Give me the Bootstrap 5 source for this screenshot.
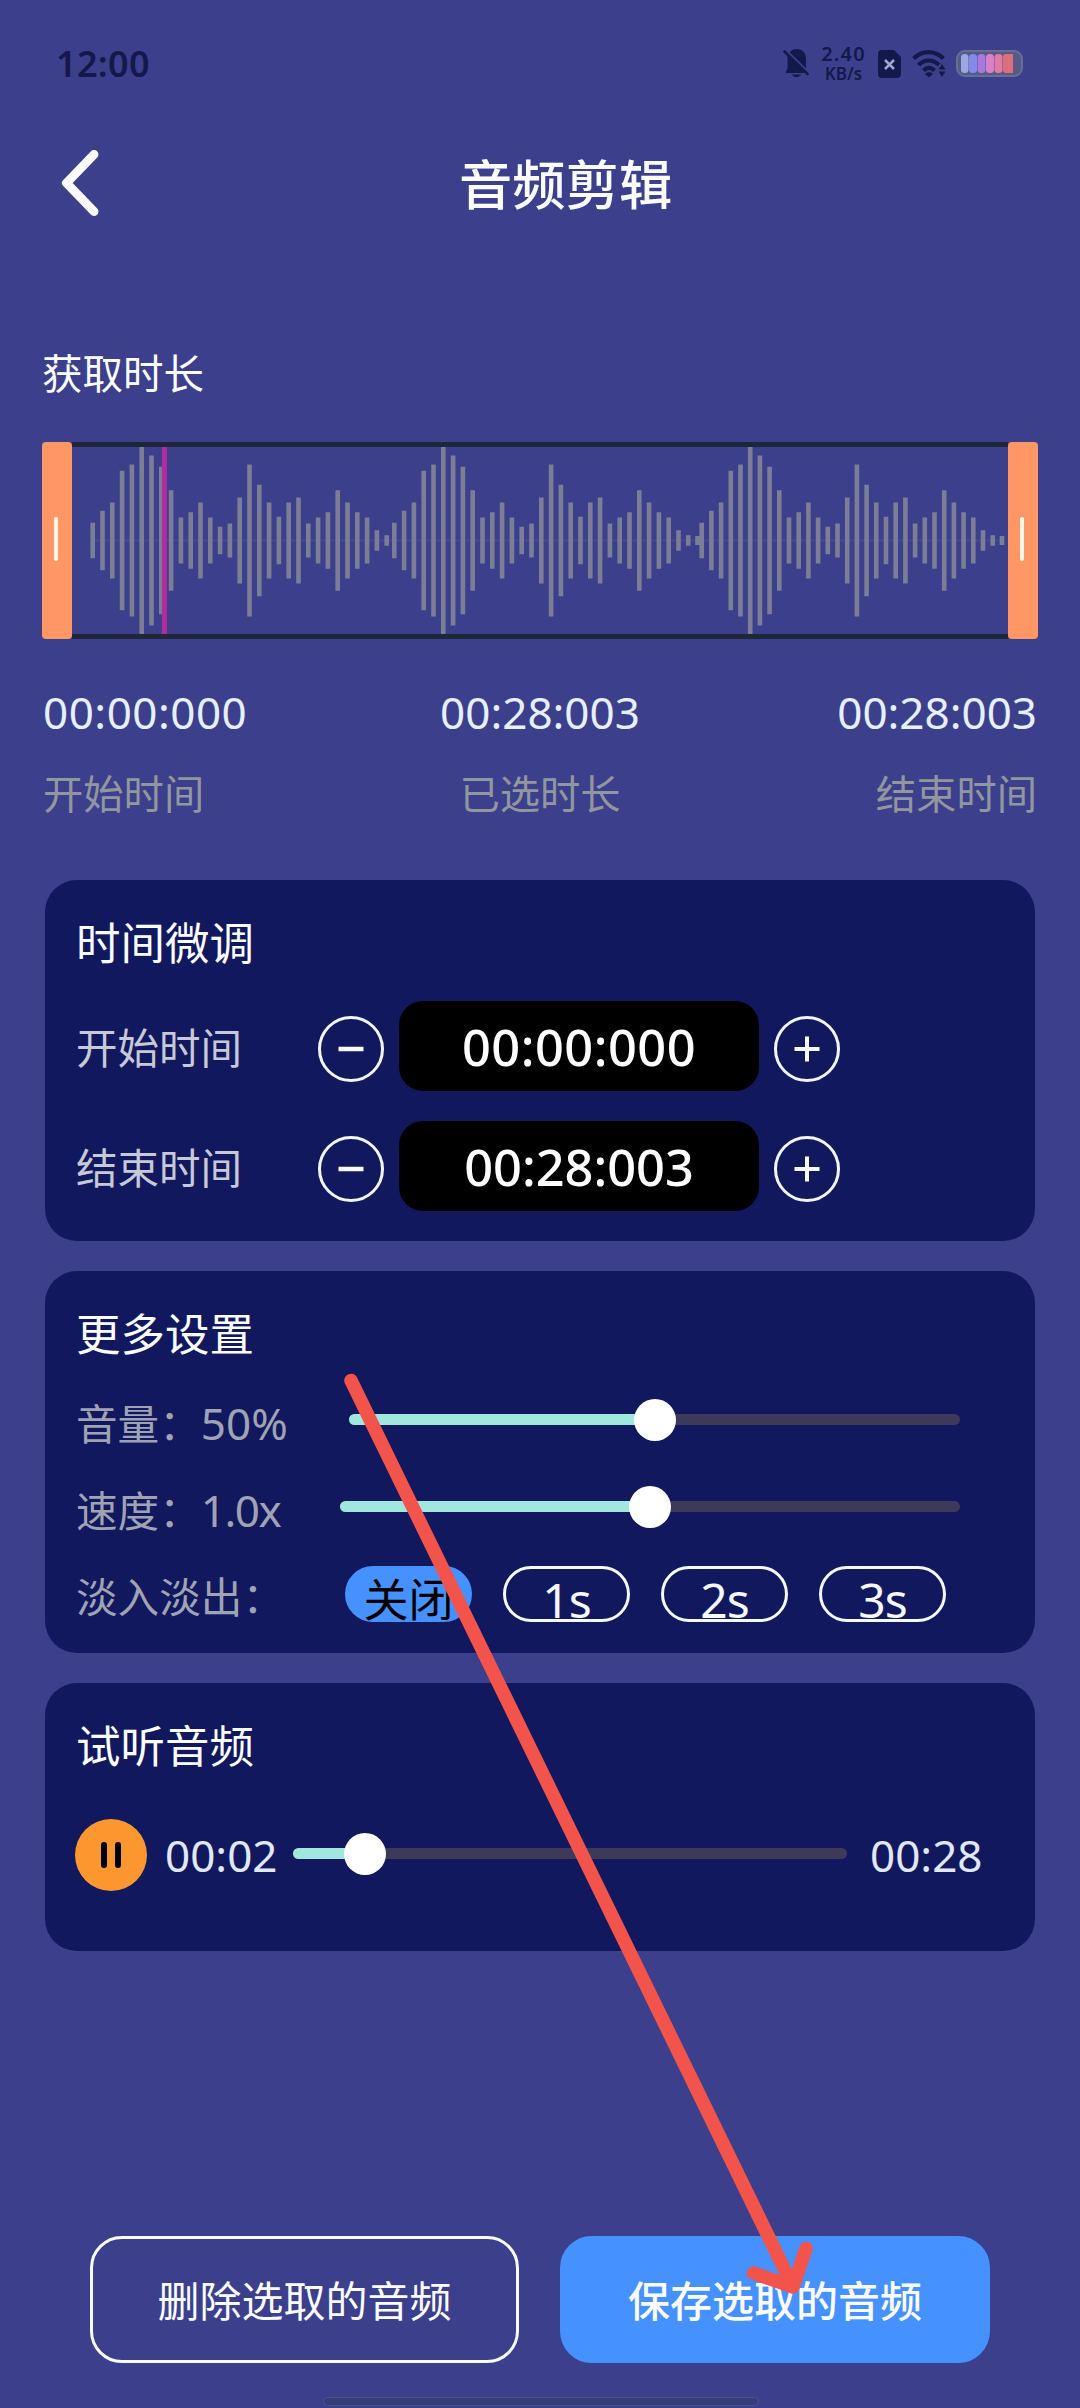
<!DOCTYPE html>
<html lang="zh-CN">
<head>
<meta charset="utf-8">
<meta name="viewport" content="width=device-width, initial-scale=1">
<title>音频剪辑</title>
<link href="https://cdn.jsdelivr.net/npm/bootstrap@5.3.0/dist/css/bootstrap.min.css" rel="stylesheet">
<style>
  body { background: #3c408c; font-family: "Noto Sans", "Noto Sans CJK SC", sans-serif; color: #fafcff; }
  svg { display: block; flex: none; }
  .screen { width: 1080px; height: 2408px; overflow: hidden; white-space: nowrap; }
  .status { height: 127px; padding: 0 57px 0 56px; color: #15184a; }
  .clock { font-size: 36px; line-height: 50px; font-weight: 600; letter-spacing: .3px; }
  .net { width: 45px; margin: 0 12px 0 11px; text-align: center; font-weight: 600; }
  .net-num { font-size: 20px; line-height: 20px; letter-spacing: 1.2px; }
  .net-unit { font-size: 17px; line-height: 19px; }
  .topbar { height: 116px; padding-left: 60px; }
  .topbar svg { margin-top: -4px; }
  .topbar h1 { font-size: 53.3px; line-height: 64px; font-weight: 500; margin: 0 0 0 359px; }
  .section-label { font-size: 40.5px; line-height: 60px; margin: 101px 0 0 42px; }
  .wave { height: 197px; margin: 38px 42px 0; }
  .handle { width: 30px; background: #ff9666; border-radius: 4px; }
  .handle i { width: 4px; height: 44px; margin: 0 2px 3px 0; background: #fff6e8; border-radius: 2px; }
  .track { border: solid #1f2637; border-width: 5px 0; }
  .times { margin: 43px 43px 0; }
  .times > div { flex: 1 1 0; }
  .stamp { font-size: 44px; line-height: 60px; color: #e6effc; }
  .cap { font-size: 40.3px; line-height: 60px; margin-top: 22px; color: #92969f; }
  .wide { letter-spacing: .5px; }
  .panel { margin: 30px 45px 0; padding: 0 32px; border-radius: 32px; background: #12185e; }
  .panel h2 { font-size: 44.5px; line-height: 60px; font-weight: 400; margin: 1px 0 -1px -1px; }
  .trim { height: 90px; }
  .trim-label { width: 241px; margin-top: 4px; font-size: 41.5px; text-indent: -1px; color: #c5c9d8; }
  .step { width: 66px; height: 66px; margin-top: 6px; border: 3px solid #f2f5fd; border-radius: 50%; background: none; padding: 0; }
  .timebox { width: 360px; height: 90px; margin: 0 15px; border-radius: 24px; background: #000; font-size: 50.5px; font-weight: 500; line-height: 92px; color: #fff; }
  .opt { height: 87px; color: #9fa3b4; font-size: 41.6px; text-indent: -1px; }
  .opt .num { font-size: 44px; }
  .progress { height: 11px; overflow: visible; border-radius: 6px; background: #3c3a58; }
  .progress-bar { background: #a0e8de; border-radius: 6px; overflow: visible; }
  .knob { width: 42px; height: 42px; border-radius: 50%; background: #fff; top: -15px; transform: translateX(-50%); }
  .pill { width: 127px; height: 56px; border: 3px solid #f5f9ff; border-radius: 28px; font-size: 48px; line-height: 62px; letter-spacing: -1px; color: #f5f9ff; text-indent: 0; }
  .pill.on { background: #4592ff; border-color: #4592ff; color: #000; font-size: 45px; line-height: 61px; letter-spacing: 0; }
  .play { width: 72px; height: 72px; border-radius: 50%; background: #fc962f; border: 0; padding: 0; }
  .clip-time { font-size: 44px; line-height: 60px; color: #e0e7f6; }
  .actions { margin: 285px 90px 0; }
  .act { height: 127px; border-radius: 32px; font-size: 42px; font-weight: 500; line-height: 60px; border: 3px solid #fafcff; color: #fafcff; }
  .act.plain { width: 429px; font-weight: 400; }
  .act.fill { width: 430px; background: #4592ff; border-color: #4592ff; }
  .act span { display: block; padding-top: 2px; }
  .homebar { width: 436px; height: 9px; margin: 34px 0 0 323px; border-radius: 5px; background: #353f77; border: 1px solid #4b4f94; }
  .pointer { left: 0; top: 0; pointer-events: none; }
</style>
</head>
<body>
<div class="screen position-relative d-flex flex-column">

  <div class="status d-flex align-items-center justify-content-between">
    <div class="clock">12:00</div>
    <div class="d-flex align-items-center">
      <svg width="27" height="29" viewBox="0 0 27 29"><path d="M14 0c5.500 0 9 4 9 9v10c0 2 1.500 3 1.500 5H2.500c0-2 2-3 2-5V9c0-5 4-9 9.500-9ZM9 25.500h9c-1.500 3.500-7.500 3.500-9 0Z" fill="#15184a"/><path d="m2 .5 24 23.500" stroke="#3c408c" stroke-width="2.500"/><path d="m1.500 2.500 23 22.500" stroke="#15184a" stroke-width="2.600" stroke-linecap="round"/></svg>
      <div class="net"><div class="net-num">2.40</div><div class="net-unit">KB/s</div></div>
      <svg width="23" height="28" viewBox="0 0 23 28"><path d="M3 0h13l7 7v17a4 4 0 0 1-4 4H4a4 4 0 0 1-4-4V4a4 4 0 0 1 3-4Z" fill="#15184a"/><path d="m7 10 9 9m0-9-9 9" stroke="#a3a7cf" stroke-width="2.500"/></svg>
      <svg style="margin-left:10px" width="37" height="29" viewBox="0 0 37 29" fill="none" stroke="#15184a" stroke-width="4.200"><path d="M2.500 9.500c9-8.500 21-8.500 30 0M7.500 16c6-6 14.500-6 20.500 0M12.500 21.500c3.500-3.500 7.500-3.500 11 0"/><path d="m14 25 4 3.500 4-3.500c-2-2.500-6-2.500-8 0Z" fill="#15184a" stroke="none"/><path d="m31 15 3.500 5.500h-7ZM31 28l3.500-5.500h-7Z" fill="#15184a" stroke="none"/></svg>
      <svg class="ms-2" width="67" height="27" viewBox="0 0 67 27"><rect x="1" y="1" width="65" height="25" rx="8" fill="#555a86" stroke="#686f96" stroke-width="2"/><rect x="5" y="4" width="7.500" height="19" rx="3.500" fill="#9ba8e2"/><rect x="13" y="4" width="8" height="19" rx="3.500" fill="#8589ee"/><rect x="21.500" y="4" width="8" height="19" rx="3.500" fill="#a878da"/><rect x="30" y="4" width="8" height="19" rx="3.500" fill="#dc7fca"/><rect x="38.500" y="4" width="8" height="19" rx="3.500" fill="#e07ba6"/><path d="M50 4h7v19h-7a3 3 0 0 1-3-3V7a3 3 0 0 1 3-3Z" fill="#dd6f7b"/></svg>
    </div>
  </div>

  <header class="topbar d-flex align-items-center">
    <svg width="40" height="66" viewBox="0 0 40 66" fill="none" stroke="#fafcff" stroke-width="9" stroke-linecap="round" stroke-linejoin="round"><path d="M34 4.500 6.500 33 34 61.500"/></svg>
    <h1>音频剪辑</h1>
  </header>

  <div class="section-label">获取时长</div>

  <div class="wave d-flex">
    <div class="handle d-flex align-items-center justify-content-center"><i></i></div>
    <div class="track flex-grow-1">
      <svg width="936" height="187" viewBox="72 447 936 187">
        <path d="M92 540.500H1003" stroke="#464996" stroke-width="2"/>
        <path id="bars" stroke="#7b7e95" stroke-width="4.600" fill="none"/>
        <path d="M164.400 447v187" stroke="#b12c9e" stroke-width="5"/>
      </svg>
    </div>
    <div class="handle d-flex align-items-center justify-content-center"><i></i></div>
  </div>

  <div class="times d-flex justify-content-between">
    <div><div class="stamp wide">00:00:000</div><div class="cap">开始时间</div></div>
    <div class="text-center"><div class="stamp">00:28:003</div><div class="cap">已选时长</div></div>
    <div class="text-end"><div class="stamp">00:28:003</div><div class="cap">结束时间</div></div>
  </div>

  <section class="panel" style="margin-top:56px;height:361px">
    <h2 style="padding-top:32px">时间微调</h2>
    <div class="trim d-flex align-items-center" style="margin-top:29px">
      <div class="trim-label">开始时间</div>
      <button class="step d-flex align-items-center justify-content-center" aria-label="减"><svg width="26" height="26" viewBox="0 0 26 26" stroke="#fafcff" stroke-width="4.500"><path d="M.5 13h25"/></svg></button>
      <div class="timebox wide text-center">00:00:000</div>
      <button class="step d-flex align-items-center justify-content-center" aria-label="加"><svg width="26" height="26" viewBox="0 0 26 26" stroke="#fafcff" stroke-width="4"><path d="M.5 13h25M13 .5v25"/></svg></button>
    </div>
    <div class="trim d-flex align-items-center" style="margin-top:30px">
      <div class="trim-label">结束时间</div>
      <button class="step d-flex align-items-center justify-content-center" aria-label="减"><svg width="26" height="26" viewBox="0 0 26 26" stroke="#fafcff" stroke-width="4.500"><path d="M.5 13h25"/></svg></button>
      <div class="timebox text-center">00:28:003</div>
      <button class="step d-flex align-items-center justify-content-center" aria-label="加"><svg width="26" height="26" viewBox="0 0 26 26" stroke="#fafcff" stroke-width="4"><path d="M.5 13h25M13 .5v25"/></svg></button>
    </div>
  </section>

  <section class="panel" style="height:382px">
    <h2 style="padding-top:32px">更多设置</h2>
    <div class="opt d-flex align-items-center" style="margin-top:16px">
      <div style="width:272px">音量：<span class="num">50%</span></div>
      <div class="progress position-relative" style="width:611px;margin-top:-6px"><div class="progress-bar" style="width:50%"></div><span class="knob position-absolute" style="left:50%"></span></div>
    </div>
    <div class="opt d-flex align-items-center">
      <div style="width:263px">速度：<span class="num" style="letter-spacing:-1.5px">1.0x</span></div>
      <div class="progress position-relative" style="width:620px;margin-top:-6px"><div class="progress-bar" style="width:50%"></div><span class="knob position-absolute" style="left:50%"></span></div>
    </div>
    <div class="opt d-flex align-items-center">
      <div style="width:268px;padding-top:2px">淡入淡出：</div>
      <div class="d-flex text-center" style="gap:31px;margin-top:-5px">
        <div class="pill on">关闭</div><div class="pill">1s</div><div class="pill">2s</div><div class="pill">3s</div>
      </div>
    </div>
  </section>

  <section class="panel" style="height:268px">
    <h2 style="padding-top:32px">试听音频</h2>
    <div class="d-flex align-items-center" style="height:72px;margin:44px 0 0 -2px">
      <button class="play d-flex align-items-center justify-content-center" aria-label="暂停"><svg width="22" height="26" viewBox="0 0 22 26" stroke="#000" stroke-width="6" stroke-linecap="round"><path d="M4 3v20M18 3v20"/></svg></button>
      <div class="clip-time" style="width:146px;padding-left:18px">00:02</div>
      <div class="progress position-relative" style="width:554px;margin-top:-3px"><div class="progress-bar" style="width:13%"></div><span class="knob position-absolute" style="left:13%"></span></div>
      <div class="clip-time" style="padding-left:23px">00:28</div>
    </div>
  </section>

  <div class="actions d-flex justify-content-between">
    <button class="act plain btn p-0"><span>删除选取的音频</span></button>
    <button class="act fill btn p-0"><span>保存选取的音频</span></button>
  </div>
  <div class="homebar"></div>

  <svg class="pointer position-absolute" width="1080" height="2408" viewBox="0 0 1080 2408" fill="none" stroke="#f2534b" stroke-width="13.500" stroke-linecap="round" stroke-linejoin="round"><path d="M351 1380.500 793 2287M753.500 2273 793 2287l13-38.500"/></svg>
</div>
<script src="https://cdn.jsdelivr.net/npm/bootstrap@5.3.0/dist/js/bootstrap.bundle.min.js"></script>
<script>
  // One clip of the waveform as half heights; the track repeats it three times.
  const half = [17.7,29.7,38,69.7,76,94,85,73.7,50.3,23,28.3,38,23,13.7,17,43,76,55.7,38,23.7,38,43,17,23,28.3,50.3,38,28.3,23,10.3,5.3];
  let d = '';
  for (const [x0, step] of [[92.7, 9.8], [394.3, 9.8], [701.7, 9.7]])
    half.forEach((h, i) => { d += `M${(x0 + i * step).toFixed(1)} ${540.5 - h}v${2 * h}`; });
  d += 'M697.5 536v9M1002 536v9';
  document.getElementById('bars').setAttribute('d', d);
</script>
</body>
</html>
